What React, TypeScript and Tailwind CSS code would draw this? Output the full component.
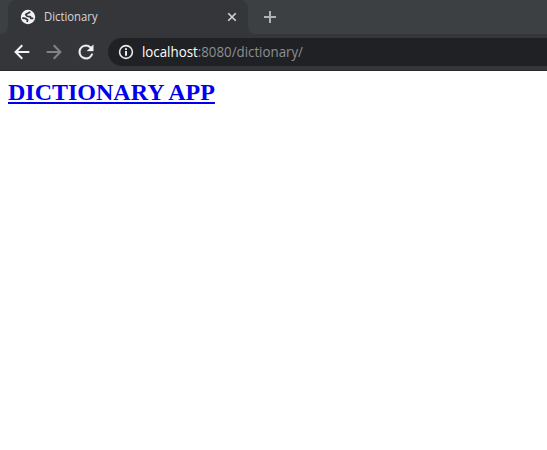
import type { ReactNode } from "react";

function Icon({ className, children }: { className: string; children: ReactNode }) {
  return (
    <svg viewBox="0 0 24 24" fill="currentColor" className={className} aria-hidden="true">
      {children}
    </svg>
  );
}

function TabStrip() {
  return (
    <div className="flex h-[34px] bg-[#3c4043]">
      <div className="flex w-2 items-end bg-[#35363a]">
        <div className="h-full w-full rounded-br-lg bg-[#3c4043]" />
      </div>
      <div className="flex bg-[#3c4043]">
        <div className="flex w-60 items-center rounded-t-lg bg-[#35363a] pr-[11px] pl-3">
          <Icon className="size-4 shrink-0 text-[#f1f3f4]">
            <circle cx="12" cy="12" r="10.8" />
            <path
              d="M15.500 4.500 12.500 6 8.500 8.200 11 11.200 15.500 11.500 16.500 14 20 14M3.500 13.500 7.500 14 11.500 16.500 10.500 19.500"
              fill="none"
              stroke="#35363a"
              strokeWidth="2.7"
              strokeLinejoin="round"
            />
          </Icon>
          <span className="ml-2 flex-1 text-[12px] leading-4 text-[#d5d7db]">
            <span className="inline-block origin-left scale-x-[0.94]">Dictionary</span>
          </span>
          <Icon className="size-[10px] text-[#cfd1d5]">
            <path d="m3 3 18 18M21 3 3 21" fill="none" stroke="currentColor" strokeWidth="4.2" />
          </Icon>
        </div>
      </div>
      <div className="flex-1 bg-[#35363a]">
        <div className="flex h-full items-center rounded-bl-lg bg-[#3c4043] pl-4">
          <Icon className="size-3 text-[#b0b3b6]">
            <path d="M12 0v24M0 12h24" fill="none" stroke="currentColor" strokeWidth="4" />
          </Icon>
        </div>
      </div>
    </div>
  );
}

function Toolbar() {
  return (
    <div className="flex h-[37px] items-center border-b border-[#28292c] bg-[#35363a] pl-[11px]">
      <Icon className="size-[22px] text-[#f1f3f4]">
        <path
          d="M20 12H5.500M12.300 4.700 5 12l7.300 7.300"
          fill="none"
          stroke="currentColor"
          strokeWidth="2.2"
        />
      </Icon>
      <Icon className="ml-[10px] size-[22px] text-[#808387]">
        <path
          d="M4 12h14.500M11.700 4.700 19 12l-7.300 7.300"
          fill="none"
          stroke="currentColor"
          strokeWidth="2.2"
        />
      </Icon>
      <Icon className="ml-[10px] size-[22px] text-[#f1f3f4]">
        <path
          d="M17.65 6.35A7.960 7.960 0 0 0 12 4a8 8 0 1 0 7.730 10h-2.080A6 6 0 1 1 12 6c1.660 0 3.140.69 4.220 1.780L13 11h7V4l-2.350 2.350z"
          stroke="currentColor"
          strokeWidth=".3"
        />
      </Icon>
      <div className="ml-[11px] flex h-7 flex-1 items-center rounded-l-full bg-[#202124] pl-2.5">
        <Icon className="size-4 text-[#e8eaed]">
          <circle cx="12" cy="12" r="9.6" fill="none" stroke="currentColor" strokeWidth="2.4" />
          <path d="M10.500 10.500h3v7h-3zM10.500 6.200h3V9h-3z" />
        </Icon>
        <span className="ml-2 flex text-[14px] leading-5 whitespace-nowrap text-[#8c8f93]">
          <span className="inline-block origin-left scale-x-[0.95]">
            <span className="text-white">localhost</span>:8080/dictionary/
          </span>
        </span>
      </div>
    </div>
  );
}

export default function App() {
  return (
    <div className="flex h-[450px] flex-col overflow-hidden bg-white font-['Open_Sans',sans-serif]">
      <TabStrip />
      <Toolbar />
      <main className="px-2 pt-2 font-['Liberation_Serif',serif]">
        <h1 className="text-[24px] leading-[27px] font-bold">
          <a href="#" className="text-[#0000ee] underline">
            DICTIONARY APP
          </a>
        </h1>
      </main>
    </div>
  );
}
